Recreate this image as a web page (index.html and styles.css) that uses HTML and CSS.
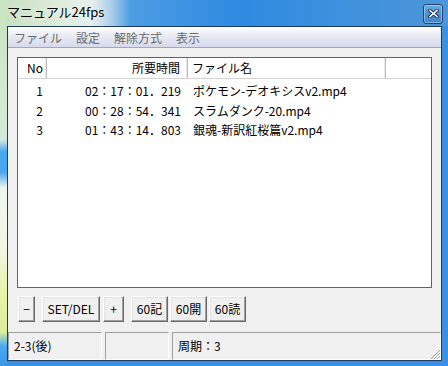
FILE: index.html
```html
<!DOCTYPE html>
<html lang="ja">
<head>
<meta charset="utf-8">
<link rel="stylesheet" href="styles.css">
</head>
<body>
<div class="window">
  <div class="titlebar">
    <span class="title">マニュアル24fps</span>
    <div class="close">
      <svg width="11" height="9" viewBox="0 0 11 9"><path d="M2 1.5 L9 7.5 M9 1.5 L2 7.5" stroke="#1d2a44" stroke-width="3.4" stroke-linecap="square"/><path d="M2 1.5 L9 7.5 M9 1.5 L2 7.5" stroke="#ffffff" stroke-width="1.6" stroke-linecap="square"/></svg>
    </div>
  </div>
  <div class="client">
    <div class="menubar">
      <span class="menu-item">ファイル</span>
      <span class="menu-item">設定</span>
      <span class="menu-item">解除方式</span>
      <span class="menu-item">表示</span>
    </div>
    <div class="content">
      <div class="list">
        <div class="list-head">
          <div class="hcell c-no">No</div>
          <div class="hcell c-time">所要時間</div>
          <div class="hcell c-name">ファイル名</div>
          <div class="hcell c-rest"></div>
        </div>
        <div class="row"><span class="c-no">1</span><span class="c-time">02：17：01．219</span><span class="c-name">ポケモン-デオキシスv2.mp4</span></div>
        <div class="row"><span class="c-no">2</span><span class="c-time">00：28：54．341</span><span class="c-name">スラムダンク-20.mp4</span></div>
        <div class="row"><span class="c-no">3</span><span class="c-time">01：43：14．803</span><span class="c-name">銀魂-新訳紅桜篇v2.mp4</span></div>
      </div>
      <div class="buttons">
        <div class="btn b-minus">−</div>
        <div class="btn b-set">SET/DEL</div>
        <div class="btn b-plus">+</div>
        <div class="btn b-60 b-first60">60記</div>
        <div class="btn b-60">60開</div>
        <div class="btn b-60">60読</div>
      </div>
    </div>
    <div class="statusbar">
      <div class="panel p1">2-3(後)</div>
      <div class="panel p2"></div>
      <div class="panel p3">周期：3</div>
      <div class="grip">
        <svg width="11" height="11" viewBox="0 0 11 11"><path d="M10 1 L1 10 M10 4 L4 10 M10 7 L7 10" stroke="#a0a0a0" stroke-width="1"/><path d="M11 2 L2 11 M11 5 L5 11 M11 8 L8 11" stroke="#ffffff" stroke-width="1"/></svg>
      </div>
    </div>
  </div>
</div>
</body>
</html>
```
FILE: styles.css
```css
* { box-sizing: border-box; }
html, body { margin: 0; padding: 0; }
body {
  width: 448px;
  height: 366px;
  overflow: hidden;
  font-family: "Noto Sans CJK JP", "Noto Sans", sans-serif;
  font-size: 12px;
  color: #000;
}
.window {
  width: 448px;
  height: 366px;
  display: flex;
  flex-direction: column;
  background:
    linear-gradient(180deg, #c8e4c0 0, #d2ecd4 120px, #cfe8dc 140px, #4aa6ee 152px, #4aa6ee 172px, #eef6ee 188px, #f2f6e2 250px, #e6f2a8 295px, #dcef9c 332px, #4aa8f0 346px, #3a98e6 366px) 0 0 / 7px 100% no-repeat,
    linear-gradient(90deg, #c6e0c0 0, #dcecd8 55px, #e6f0ee 92px, #a9cde9 112px, #4d9de4 130px, #2f8ae0 240px, #3c90de 330px, #4c96d8 448px) 0 0 / 100% 26px no-repeat,
    #3a90e2;
}
.titlebar {
  height: 26px;
  display: flex;
  align-items: center;
  justify-content: space-between;
  padding-left: 7px;
  padding-right: 5px;
}
.title {
  font-size: 13px;
  line-height: 16px;
  color: #000;
  text-shadow: 0 0 6px rgba(255,255,255,0.9);
  margin-top: -2px;
}
.close {
  width: 20px;
  height: 20px;
  margin-top: 1px;
  border: 1px solid #27446e;
  border-radius: 3px;
  background: linear-gradient(180deg, #6aaae4 0, #4c92d6 50%, #3f86cf 100%);
  box-shadow: inset 0 0 0 1px rgba(255,255,255,0.35);
  display: flex;
  align-items: center;
  justify-content: center;
}
.client {
  flex: 1;
  margin: 0 6px 5px 7px;
  border: 1px solid #1c3a62;
  background: #f0f0f0;
  display: flex;
  flex-direction: column;
}
.menubar {
  height: 21px;
  display: flex;
  align-items: center;
  gap: 14px;
  padding-left: 6px;
  background: linear-gradient(180deg, #ffffff 0, #f4f5fa 20%, #e4e7f2 55%, #d6daec 100%);
  border-bottom: 1px solid #a8a8b0;
  color: #6a6a6a;
  line-height: 14px;
}
.menu-item { padding-top: 1px; }
.content {
  flex: 1;
  display: flex;
  flex-direction: column;
  padding: 9px 9px 0 9px;
}
.list {
  height: 231px;
  background: #fff;
  border: 1px solid #646464;
}
.list-head {
  height: 21px;
  display: flex;
  background: #fff;
  border-bottom: 1px solid #d5d5d5;
}
.hcell {
  line-height: 20px;
  border-right: 1px solid #bdbdbd;
  box-shadow: inset -1px 0 #e8e8e8;
}
.c-no { width: 29px; text-align: right; padding-right: 3px; flex: none; }
.c-time { width: 141px; text-align: right; padding-right: 7px; flex: none; }
.c-name { width: 198px; padding-left: 4px; flex: none; }
.c-rest { flex: 1; border-right: none; box-shadow: none; }
.list-head .c-no { padding-right: 3px; }
.row {
  display: flex;
  height: 19.5px;
  line-height: 19px;
}
.row:first-of-type { margin-top: 0; }
.list-head + .row { margin-top: 2px; }
.row .c-no { padding-right: 4px; }
.row .c-name { padding-left: 5px; }
.buttons {
  display: flex;
  margin-top: 8px;
  margin-left: 1px;
  height: 26px;
}
.btn {
  height: 26px;
  display: flex;
  align-items: center;
  justify-content: center;
  background: #f0f0f0;
  border: 1px solid;
  border-color: #ffffff #696969 #696969 #ffffff;
  box-shadow: inset -1px -1px #a0a0a0, inset 1px 1px #e3e3e3;
  font-size: 12px;
  line-height: 14px;
}
.b-minus { width: 17px; }
.b-set { width: 58px; margin-left: 7px; }
.b-plus { width: 21px; margin-left: 3px; }
.b-60 { width: 37px; margin-left: 2px; }
.b-first60 { margin-left: 7px; }
.statusbar {
  height: 28px;
  margin-top: 9px;
  display: flex;
  position: relative;
}
.panel {
  height: 28px;
  border: 1px solid;
  border-color: #a0a0a0 #ffffff #ffffff #a0a0a0;
  line-height: 25px;
  padding-left: 5px;
}
.p1 { width: 94px; }
.p2 { width: 64px; margin-left: 3px; }
.p3 { flex: 1; margin-left: 3px; }
.grip {
  position: absolute;
  right: 0;
  bottom: 0;
  width: 11px;
  height: 11px;
  line-height: 0;
}
```
